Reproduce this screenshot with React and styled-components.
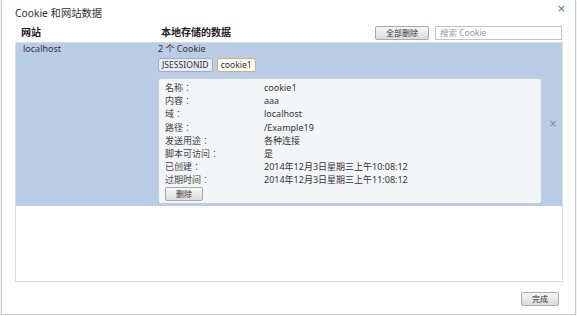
import React from "react";
import styled, { createGlobalStyle } from "styled-components";

const GlobalStyle = createGlobalStyle`
  html, body {
    margin: 0;
    padding: 0;
    background: #ffffff;
  }
  body {
    font-family: "Noto Sans", "Noto Sans CJK SC", sans-serif;
    color: #333;
  }
`;

const Dialog = styled.div`
  box-sizing: border-box;
  width: 575px;
  height: 315px;
  margin-left: 1px;
  background: #fff;
  border: 1px solid #c9c9c9;
  border-top: none;
  box-shadow: 0 1px 2px rgba(0, 0, 0, 0.15);
  display: flex;
  flex-direction: column;
  position: relative;
`;

const TitleBar = styled.div`
  height: 24px;
  padding-left: 13px;
  display: flex;
  align-items: center;
  font-size: 10.3px;
  color: #333;
`;

const CloseX = styled.span`
  position: absolute;
  top: 2px;
  right: 9px;
  font-size: 11px;
  color: #777;
  font-family: "DejaVu Sans", sans-serif;
`;

const Body = styled.div`
  padding: 0 13px;
  flex: 1;
  display: flex;
  flex-direction: column;
`;

const HeaderRow = styled.div`
  display: grid;
  grid-template-columns: 146px 1fr auto;
  align-items: center;
  height: 17px;
`;

const HeadCell = styled.div`
  font-size: 10px;
  font-weight: 700;
  color: #222;
  margin-top: -3px;
  padding-left: ${(p) => p.$pad || 0}px;
`;

const Tools = styled.div`
  display: flex;
  align-items: center;
  gap: 6px;
`;

const Btn = styled.button`
  display: block;
  box-sizing: border-box;
  height: 14px;
  width: ${(p) => p.$w}px;
  padding: 0;
  border: 1px solid #a9a9a9;
  border-radius: 2px;
  background: linear-gradient(#f7f7f7, #dcdcdc);
  font-family: "Noto Sans CJK SC", sans-serif;
  font-size: 8px;
  color: #333;
  line-height: 12px;
`;

const Search = styled.input`
  box-sizing: border-box;
  width: 127px;
  height: 14px;
  border: 1px solid #c4c4c4;
  padding: 0 4px;
  font-family: "Noto Sans", "Noto Sans CJK SC", sans-serif;
  font-size: 8.5px;
  outline: none;
  &::placeholder {
    color: #9a9a9a;
  }
`;

const List = styled.div`
  margin-top: 1px;
  height: 240px;
  border: 1px solid #dcdcdc;
  box-sizing: border-box;
  width: 548px;
`;

const SiteRow = styled.div`
  display: grid;
  grid-template-columns: 142px 1fr 22px;
  background: #b9cde6;
  padding: 0 0 2px;
`;

const SiteName = styled.div`
  font-size: 9px;
  line-height: 12px;
  color: #333;
  padding-left: 7px;
`;

const CookieCol = styled.div`
  display: flex;
  flex-direction: column;
`;

const CountLine = styled.div`
  font-size: 9px;
  color: #333;
  height: 12px;
  line-height: 12px;
`;

const Chips = styled.div`
  display: flex;
  gap: 4px;
  margin-top: 3px;
`;

const Chip = styled.span`
  box-sizing: border-box;
  height: 14px;
  padding: 0 3px;
  border-radius: 3px;
  font-size: 8.6px;
  line-height: 12px;
  color: #333;
  border: 1px solid ${(p) => (p.$active ? "#d8b068" : "#a3aabf")};
  background: ${(p) => (p.$active ? "#fffdf8" : "#e9ecf4")};
`;

const Details = styled.div`
  margin-top: 6px;
  box-sizing: border-box;
  background: #f3f6f8;
  border: 1px solid #c6ccd3;
  border-radius: 3px;
  padding: 2px 6px;
  width: 384px;
  font-size: 9px;
`;

const DetailRow = styled.div`
  display: grid;
  grid-template-columns: 99px 1fr;
  height: 13.2px;
  line-height: 13.2px;
  font-size: 9px;
  white-space: nowrap;
`;

const Label = styled.span`
  color: #444;
  font-family: "Noto Sans CJK JP", sans-serif;
  text-spacing-trim: space-all;
`;

const Value = styled.span`
  color: #333;
`;

const RemoveX = styled.div`
  display: flex;
  align-items: center;
  justify-content: center;
  color: #8a8a8a;
  font-size: 10px;
  font-family: "DejaVu Sans", sans-serif;
`;

const Footer = styled.div`
  display: flex;
  justify-content: flex-end;
  padding: 10px 3px 0 0;
`;

const rows = [
  ["名称：", "cookie1"],
  ["内容：", "aaa"],
  ["域：", "localhost"],
  ["路径：", "/Example19"],
  ["发送用途：", "各种连接"],
  ["脚本可访问：", "是"],
  ["已创建：", "2014年12月3日星期三上午10:08:12"],
  ["过期时间：", "2014年12月3日星期三上午11:08:12"],
];

export default function App() {
  return (
    <>
      <GlobalStyle />
      <Dialog>
        <TitleBar>Cookie 和网站数据</TitleBar>
        <CloseX>×</CloseX>
        <Body>
          <HeaderRow>
            <HeadCell $pad={6}>网站</HeadCell>
            <HeadCell>本地存储的数据</HeadCell>
            <Tools>
              <Btn $w={54}>全部删除</Btn>
              <Search placeholder="搜索 Cookie" />
            </Tools>
          </HeaderRow>
          <List>
            <SiteRow>
              <SiteName>localhost</SiteName>
              <CookieCol>
                <CountLine>2 个 Cookie</CountLine>
                <Chips>
                  <Chip>JSESSIONID</Chip>
                  <Chip $active>cookie1</Chip>
                </Chips>
                <Details>
                  {rows.map(([k, v]) => (
                    <DetailRow key={k}>
                      <Label>{k}</Label>
                      <Value>{v}</Value>
                    </DetailRow>
                  ))}
                  <Btn $w={38}>删除</Btn>
                </Details>
              </CookieCol>
              <RemoveX>×</RemoveX>
            </SiteRow>
          </List>
          <Footer>
            <Btn $w={38}>完成</Btn>
          </Footer>
        </Body>
      </Dialog>
    </>
  );
}
